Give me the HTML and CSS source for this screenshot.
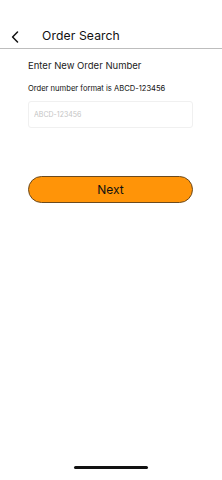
FILE: index.html
```html
<!DOCTYPE html>
<html lang="en">
<head>
<meta charset="utf-8">
<meta name="viewport" content="width=device-width, initial-scale=1">
<title>Order Search</title>
<link rel="stylesheet" href="styles.css">
</head>
<body>
<div class="screen">
  <header class="topbar">
    <svg class="back" width="8" height="12" viewBox="0 0 8 12" aria-hidden="true">
      <path d="M6.5 1 L1.6 6 L6.5 11" fill="none" stroke="#111" stroke-width="1.5" stroke-linecap="round" stroke-linejoin="round"/>
    </svg>
    <h1 class="title">Order Search</h1>
  </header>
  <main class="content">
    <h2 class="label">Enter New Order Number</h2>
    <p class="hint">Order number format is ABCD-123456</p>
    <input class="field" type="text" placeholder="ABCD-123456">
    <button class="next" type="button">Next</button>
  </main>
  <div class="home-bar"></div>
</div>
</body>
</html>
```
FILE: styles.css
```css
* { box-sizing: border-box; }
html, body { margin: 0; padding: 0; background: #fff; }
body { font-family: "Inter", "Noto Sans", "Liberation Sans", sans-serif; color: #111; }
.screen { width: 222px; height: 480px; display: flex; flex-direction: column; }
.topbar {
  height: 49px;
  padding: 26px 0 0 11px;
  display: flex;
  align-items: flex-start;
  gap: 23px;
  border-bottom: 1.5px solid #bdbdbd;
}
.back { margin-top: 5px; flex: none; }
.title { margin: 0; font-size: 12.2px; font-weight: 400; line-height: 20px; letter-spacing: 0.1px; color: #111; }
.content { padding: 10px 29px 0 28px; display: flex; flex-direction: column; flex: 1; }
.label { margin: 0; font-size: 9.5px; font-weight: 400; line-height: 14px; color: #222; }
.hint { margin: 10px 0 0; font-size: 7.6px; line-height: 11px; color: #111; }
.field {
  margin-top: 7px;
  height: 27px;
  width: 100%;
  border: 1px solid #f0f0f0;
  border-radius: 3px;
  padding: 0 5px;
  font: inherit;
  font-size: 7px;
  color: #333;
  outline: none;
}
.field::placeholder { color: #c4c4c4; }
.next {
  margin-top: 48px;
  height: 27px;
  width: 100%;
  border: 1px solid #6b4a1e;
  border-radius: 14px;
  background: #ff9408;
  font: inherit;
  font-size: 12px;
  color: #111;
  padding: 0;
}
.home-bar {
  margin: 0 auto 11px;
  width: 74px;
  height: 3px;
  border-radius: 2px;
  background: #111;
}
```
